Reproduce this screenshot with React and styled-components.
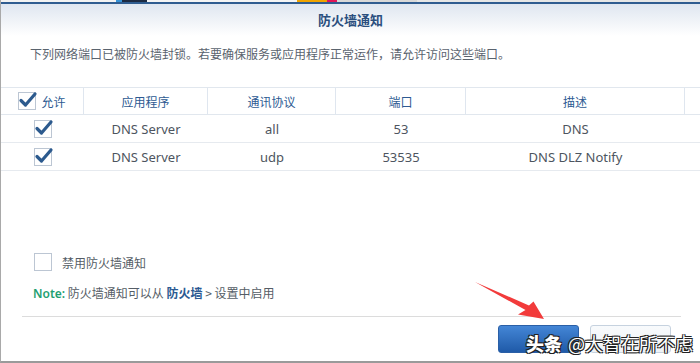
import React from 'react';
import styled, { createGlobalStyle } from 'styled-components';

const GlobalStyle = createGlobalStyle`
  html, body { margin: 0; padding: 0; background: #fff; }
  body { font-family: "Noto Sans", "Noto Sans CJK SC", sans-serif; }
`;

const rows = [
  { app: 'DNS Server', proto: 'all', port: '53', desc: 'DNS' },
  { app: 'DNS Server', proto: 'udp', port: '53535', desc: 'DNS DLZ Notify' },
];

const Check = ({ checked }) => (
  <Box>
    {checked && (
      <svg width="20" height="18" viewBox="0 0 20 18">
        <path d="M3 9.5 L7.5 14 L17 3" fill="none" stroke="#2c5a8e" strokeWidth="3.2" strokeLinecap="round" strokeLinejoin="round" />
      </svg>
    )}
  </Box>
);

export default function App() {
  return (
    <Page>
      <GlobalStyle />
      <TopStrip>
        <Chip $w={115} $c="#f2f2f2" />
        <Chip $w={6} $c="#3592d6" />
        <Chip $w={25} $c="#1c2a42" />
        <Chip $w={150} $c="#f4f4f4" />
        <Chip $w={30} $c="#f0a400" />
        <Chip $w={10} $c="#e21558" />
        <Chip $w={80} $c="#d8d8d8" />
      </TopStrip>
      <Header>防火墙通知</Header>
      <Intro>下列网络端口已被防火墙封锁。若要确保服务或应用程序正常运作，请允许访问这些端口。</Intro>
      <Table>
        <HeadRow>
          <HeadCell $w={83}>
            <Check checked />
            <span>允许</span>
          </HeadCell>
          <HeadCell $w={124}>应用程序</HeadCell>
          <HeadCell $w={128}>通讯协议</HeadCell>
          <HeadCell $w={130}>端口</HeadCell>
          <HeadCell $w={219}>描述</HeadCell>
          <HeadCell $w={16} $last />
        </HeadRow>
        {rows.map((r, i) => (
          <Row key={i}>
            <Cell $w={83}><Check checked /></Cell>
            <Cell $w={124}>{r.app}</Cell>
            <Cell $w={128}>{r.proto}</Cell>
            <Cell $w={130}>{r.port}</Cell>
            <Cell $w={219}>{r.desc}</Cell>
          </Row>
        ))}
      </Table>
      <Options>
        <OptionLine>
          <Check />
          <Label>禁用防火墙通知</Label>
        </OptionLine>
        <Note>
          <NoteTag>Note:</NoteTag> 防火墙通知可以从 <LinkText>防火墙</LinkText> &gt; 设置中启用
        </Note>
      </Options>
      <Footer>
        <Button $primary aria-label="允许" />
        <Button aria-label="取消" />
      </Footer>
      <Arrow width="700" height="363" viewBox="0 0 700 363">
        <polygon points="475,282 529,305.5 533.5,301.5 544,319 518,314.5 525.5,310" fill="#f23b3b" />
      </Arrow>
      <Watermark><b>头条</b> @大智在所不虑</Watermark>
    </Page>
  );
}

const Page = styled.div`
  position: relative;
  width: 700px;
  height: 363px;
  overflow: hidden;
  background: #fff;
  box-sizing: border-box;
  border-left: 1px solid #a9a9a9;
  border-bottom: 2px solid #9a9a9a;
  display: flex;
  flex-direction: column;
`;

const TopStrip = styled.div`
  height: 2px;
  display: flex;
  background: #e6e6e6;
`;

const Chip = styled.div`
  width: ${p => p.$w}px;
  background: ${p => p.$c};
`;

const Header = styled.div`
  height: 31px;
  border-top: 2px solid #2f5c90;
  background: linear-gradient(#dfe6f0, #ffffff);
  display: flex;
  align-items: center;
  justify-content: center;
  font-family: "Noto Sans CJK SC", sans-serif;
  font-weight: bold;
  font-size: 13px;
  color: #2b4f7e;
  padding-bottom: 1px;
`;

const Intro = styled.div`
  padding: 9px 0 0 29px;
  height: 26px;
  font-family: "Noto Sans CJK SC", sans-serif;
  font-size: 12px;
  color: #5a636e;
`;

const Table = styled.div`
  margin-top: 16px;
  border-top: 1px solid #e1e7ee;
`;

const HeadRow = styled.div`
  display: flex;
  height: 26px;
  border-bottom: 1px solid #e1e7ee;
`;

const HeadCell = styled.div`
  width: ${p => p.$w}px;
  flex: none;
  box-sizing: border-box;
  border-right: ${p => (p.$last ? 'none' : '1px solid #dfe6ef')};
  display: flex;
  align-items: center;
  justify-content: center;
  gap: 5px;
  font-family: "Noto Sans CJK SC", sans-serif;
  font-size: 12px;
  color: #2d5a92;
`;

const Row = styled.div`
  display: flex;
  height: 27px;
  border-bottom: 1px solid #e6eaef;
`;

const Cell = styled.div`
  width: ${p => p.$w}px;
  flex: none;
  display: flex;
  align-items: center;
  justify-content: center;
  font-family: "Noto Sans", "Noto Sans CJK SC", sans-serif;
  font-size: 13px;
  color: #4d5560;
`;

const Box = styled.div`
  position: relative;
  width: 16px;
  height: 16px;
  border: 1px solid #bcc6d3;
  background: #fff;
  flex: none;

  svg {
    position: absolute;
    left: -1px;
    top: -2px;
  }
`;

const Options = styled.div`
  margin-top: 82px;
  padding-left: 33px;
  display: flex;
  flex-direction: column;
  gap: 13px;
`;

const OptionLine = styled.div`
  display: flex;
  align-items: center;
  gap: 10px;
`;

const Label = styled.span`
  font-family: "Noto Sans CJK SC", sans-serif;
  font-size: 12px;
  color: #555d66;
`;

const Note = styled.div`
  font-family: "Noto Sans CJK SC", sans-serif;
  font-size: 12px;
  color: #555d66;
  margin-left: -1px;
`;

const NoteTag = styled.span`
  font-family: "Noto Sans", sans-serif;
  color: #1fa072;
  font-weight: 600;
`;

const LinkText = styled.span`
  color: #2b5a92;
  font-weight: bold;
`;

const Footer = styled.div`
  margin: 14px 19px 0 21px;
  border-top: 1px solid #dcdcdc;
  padding-top: 8px;
  display: flex;
  justify-content: flex-end;
  gap: 11px;
  padding-right: 10px;
`;

const Button = styled.div`
  width: 81px;
  height: 28px;
  box-sizing: border-box;
  border-radius: 3px;
  border: 1px solid ${p => (p.$primary ? '#2a5fa6' : '#c6d2df')};
  background: ${p => (p.$primary ? 'linear-gradient(#4486d6, #1f5aa8)' : 'linear-gradient(#f8fafc, #eef2f6)')};
`;

const Arrow = styled.svg`
  position: absolute;
  left: -1px;
  top: 0;
  pointer-events: none;
`;

const Watermark = styled.div`
  position: absolute;
  left: 525px;
  top: 330px;
  font-family: "Noto Sans CJK SC", sans-serif;
  font-size: 18px;
  color: #fff;
  white-space: nowrap;
  text-shadow: 1px 1px 0 #222, -1px -1px 0 #222, 1px -1px 0 #222, -1px 1px 0 #222;

  b { font-weight: 900; margin-right: 2px; }
`;
